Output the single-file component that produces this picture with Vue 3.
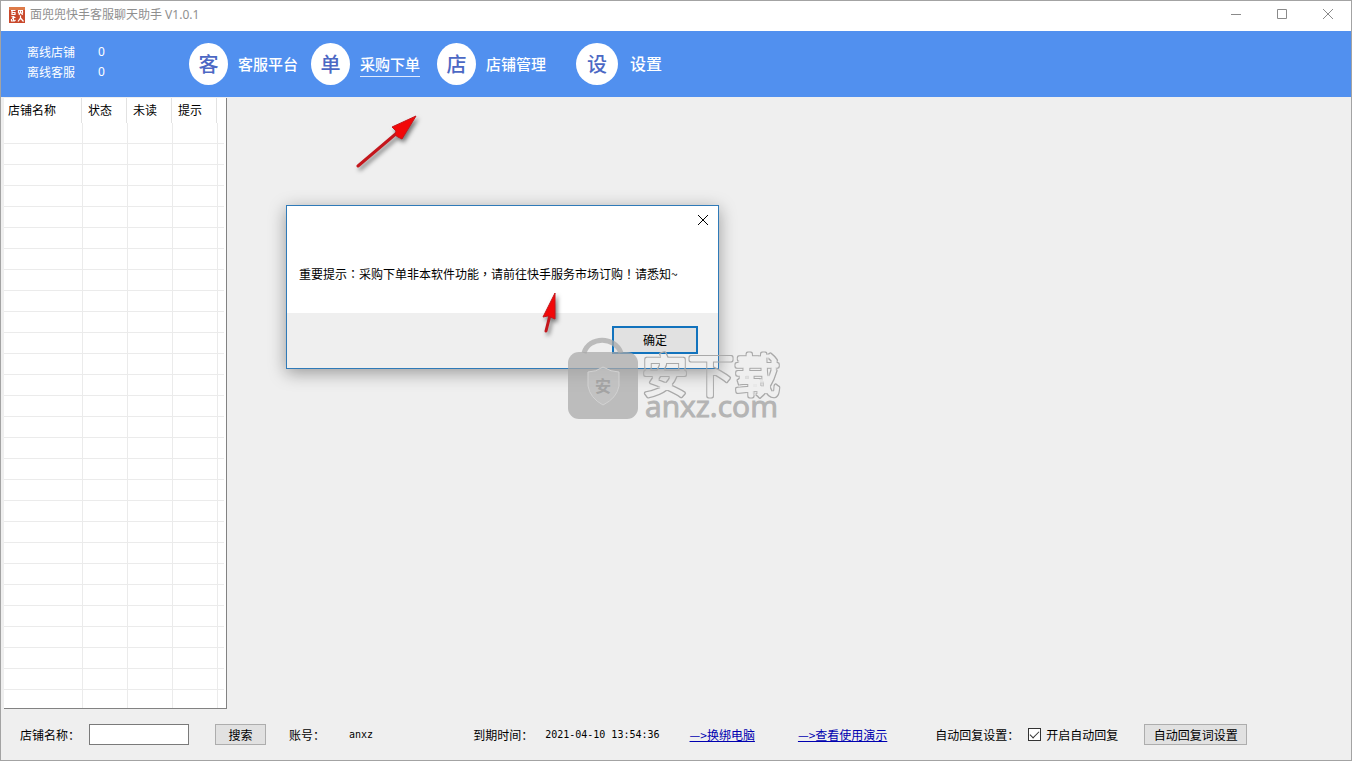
<script setup>
import { ref } from 'vue'

const navItems = [
  { mark: '客', label: '客服平台' },
  { mark: '单', label: '采购下单', active: true },
  { mark: '店', label: '店铺管理' },
  { mark: '设', label: '设置', wide: true },
]
const columns = ['店铺名称', '状态', '未读', '提示', '']
const rowCount = 28
const keyword = ref('')
const autoReply = ref(true)
</script>

<template>
  <div class="window">
    <header class="titlebar">
      <svg class="logo" viewBox="0 0 16 16" aria-hidden="true">
        <rect width="16" height="16" fill="#c9492c" />
        <path d="M0 0h16v3H0z" fill="#dd7a48" />
        <g fill="none" stroke="#fff" stroke-width="1.200">
          <path d="M2 3.500h4.500M3 4v3.500h3V5M3 5.500h3M9 3.500h5M9.500 3.500v2.500h4V3.500M11.500 3.500v2.500M10 8l1-2M13.500 8l-1-2" />
          <path d="M2.500 9.500l4 1M3 11.500l3-1.500M4.500 9v5M2.500 12v2h3l1-1M11.500 8.500v2.500L9 14.500M11.500 11L14.500 14.500" />
        </g>
      </svg>
      <h1>面兜兜快手客服聊天助手 V1.0.1</h1>
      <div class="controls">
        <button type="button" aria-label="最小化">
          <svg viewBox="0 0 12 12"><path d="M1 5.500h10" /></svg>
        </button>
        <button type="button" aria-label="最大化">
          <svg viewBox="0 0 12 12"><path d="M1.500 .5h9v9h-9z" /></svg>
        </button>
        <button type="button" aria-label="关闭">
          <svg viewBox="0 0 12 12"><path d="M1 0l10 10M11 0L1 10" /></svg>
        </button>
      </div>
    </header>

    <div class="banner">
      <dl class="status">
        <dt>离线店铺</dt><dd>0</dd>
        <dt>离线客服</dt><dd>0</dd>
      </dl>
      <nav class="nav">
        <button v-for="item in navItems" :key="item.label" type="button" :class="{ wide: item.wide }">
          <span class="mark">{{ item.mark }}</span>
          <span class="name" :class="{ active: item.active }">{{ item.label }}</span>
        </button>
      </nav>
    </div>

    <main class="main">
      <div class="list">
        <table>
          <colgroup>
            <col class="col-name" /><col class="col" /><col class="col" /><col class="col" /><col />
          </colgroup>
          <thead>
            <tr><th v-for="(c, i) in columns" :key="i" scope="col">{{ c }}</th></tr>
          </thead>
          <tbody>
            <tr v-for="r in rowCount" :key="r"><td v-for="(c, i) in columns" :key="i"></td></tr>
          </tbody>
        </table>
      </div>
    </main>

    <footer class="footer">
      <label for="shop">店铺名称：</label>
      <input id="shop" v-model="keyword" class="field" type="text" />
      <button type="button" class="btn search">搜索</button>
      <span class="account">账号：</span>
      <span class="mono user">anxz</span>
      <span class="expire">到期时间：</span>
      <span class="mono time">2021-04-10 13:54:36</span>
      <a class="rebind" href="#">—&gt;换绑电脑</a>
      <a class="demo" href="#">—&gt;查看使用演示</a>
      <span class="auto">自动回复设置：</span>
      <label class="check"><input v-model="autoReply" type="checkbox" />开启自动回复</label>
      <button type="button" class="btn words">自动回复词设置</button>
    </footer>

    <section class="dialog" role="dialog" aria-label="重要提示">
      <div class="dialog-body">
        <button type="button" class="close" aria-label="关闭">
          <svg viewBox="0 0 12 12"><path d="M1 1l10 10M11 1L1 11" /></svg>
        </button>
        <p>重要提示<span class="mid">：</span>采购下单非本软件功能<span class="mid">，</span>请前往快手服务市场订购<span class="mid">！</span>请悉知~</p>
      </div>
      <div class="dialog-foot">
        <button type="button" class="ok">确定</button>
      </div>
    </section>

    <svg class="arrow arrow-long" viewBox="0 0 80 70" aria-hidden="true">
      <path d="M8 56L48 22" stroke="#c4161c" stroke-width="3" stroke-linecap="round" />
      <path d="M66 6L42 17L46 21L45 25L48 27L52 29Z" fill="#f20808" stroke="#c4161c" stroke-width="1" />
    </svg>
    <svg class="arrow arrow-short" viewBox="0 0 30 55" aria-hidden="true">
      <path d="M11 44L15 28" stroke="#c4161c" stroke-width="3" stroke-linecap="round" />
      <path d="M20 6L8 30L13 29L20 32Z" fill="#f20808" stroke="#c4161c" stroke-width="1" />
    </svg>

    <svg class="watermark" viewBox="0 0 220 90" aria-hidden="true">
      <filter id="contour" x="-5%" y="-10%" width="110%" height="120%">
        <feMorphology in="SourceAlpha" operator="erode" radius="1" result="inner" />
        <feComposite in="SourceGraphic" in2="inner" operator="out" />
      </filter>
      <path d="M19 19C24 2 50 2 56 19" fill="none" stroke="#aaa" stroke-opacity=".75" stroke-width="5" />
      <rect x="3" y="18" width="70" height="67" rx="11" fill="#a8a8a8" fill-opacity=".72" />
      <path d="M38 33Q46 38 54 38V52Q52 64 38 71Q25 64 23 52V38Q31 38 38 33Z" fill="#c6c6c6" fill-opacity=".6" stroke="#d2d2d2" />
      <text class="wm-seal" x="30" y="58">安</text>
      <text class="wm-name" x="77" y="58">安下载</text>
      <text class="wm-site" x="80" y="83">anxz.com</text>
    </svg>
  </div>
</template>

<style>
body {
  margin: 0;
}
</style>

<style scoped>
.window {
  position: relative;
  display: flex;
  flex-direction: column;
  box-sizing: border-box;
  height: 100vh;
  border: 1px solid #a3a3a3;
  background: #efefef;
  color: #000;
  font-family: "Noto Sans CJK SC", sans-serif;
  font-size: 12px;
  line-height: 20px;
  overflow: hidden;
}
button {
  margin: 0;
  padding: 0;
  border: 0;
  background: none;
  color: inherit;
  font: inherit;
}
.titlebar {
  display: flex;
  align-items: center;
  flex: none;
  box-sizing: border-box;
  height: 30px;
  padding: 0 0 2px 8px;
  background: #fff;
}
.logo {
  width: 16px;
  height: 16px;
}
h1 {
  margin: 0 auto 0 5px;
  color: #8f8f8f;
  font-family: "Noto Sans", "Noto Sans CJK SC", sans-serif;
  font-size: 12px;
  font-weight: 400;
}
.controls {
  display: flex;
}
.controls button {
  display: flex;
  align-items: center;
  justify-content: center;
  width: 46px;
  height: 28px;
}
.controls svg,
.close svg {
  width: 12px;
  height: 12px;
  fill: none;
  stroke: #8a8a8a;
  overflow: visible;
}
.banner {
  display: flex;
  align-items: center;
  flex: none;
  height: 66px;
  background: #5190ef;
  color: #fff;
}
.status {
  display: grid;
  grid-template-columns: 71px 91px;
  margin: 0 0 0 26px;
  padding-bottom: 5px;
}
.status dd {
  margin: 0;
  font-family: "Noto Sans", sans-serif;
}
.nav {
  display: grid;
  grid-template-columns: 122px 126px 139px auto;
}
.nav button {
  display: flex;
  align-items: center;
  gap: 10px;
}
.nav .wide {
  gap: 12px;
}
.mark {
  display: flex;
  align-items: center;
  justify-content: center;
  width: 39px;
  height: 42px;
  border-radius: 50%;
  background: #fff;
  color: #4c68c4;
  font-size: 20px;
  font-weight: 500;
}
.wide .mark {
  width: 42px;
}
.name {
  padding-bottom: 1px;
  border-bottom: 1px solid transparent;
  font-size: 15px;
  font-weight: 500;
  line-height: 23px;
}
.wide .name {
  font-size: 16px;
}
.name.active {
  border-bottom-color: #dfeaff;
}
.main {
  display: flex;
  flex: 1;
  min-height: 0;
  padding: 1px 0 0 3px;
}
.list {
  box-sizing: border-box;
  width: 223px;
  padding-right: 2px;
  border-right: 1px solid #828282;
  border-bottom: 1px solid #828282;
  background: #fff;
  overflow: hidden;
}
table {
  width: 100%;
  table-layout: fixed;
  border-collapse: separate;
  border-spacing: 0;
}
.col-name {
  width: 78px;
}
.col {
  width: 45px;
}
th {
  box-sizing: border-box;
  height: 25px;
  padding: 0 0 1px 6px;
  border-right: 1px solid #e2e2e2;
  font-weight: 400;
  text-align: left;
  white-space: nowrap;
}
th:first-child {
  padding-left: 4px;
}
th:last-child {
  border-right: 0;
}
td {
  box-sizing: border-box;
  height: 21px;
  padding: 0;
  border-bottom: 1px solid #ebebeb;
  border-left: 1px solid #ebebeb;
}
td:first-child {
  border-left: 0;
}
.footer {
  display: flex;
  align-items: center;
  flex: none;
  height: 51px;
  padding-left: 19px;
  white-space: nowrap;
}
.field {
  box-sizing: border-box;
  width: 100px;
  height: 21px;
  margin-left: 9px;
  padding: 0 4px;
  border: 1px solid #7a7a7a;
  background: #fff;
  font: inherit;
}
.btn {
  box-sizing: border-box;
  height: 21px;
  border: 1px solid #adadad;
  background: #e1e1e1;
  line-height: 19px;
}
.search {
  width: 51px;
  margin-left: 26px;
}
.account {
  margin-left: 23px;
}
.mono {
  font-family: "DejaVu Sans Mono", monospace;
  font-size: 10px;
}
.user {
  margin-left: 24px;
}
.expire {
  margin-left: 100px;
}
.time {
  margin-left: 12px;
}
.footer a {
  color: #0000b0;
  text-decoration: underline;
}
.rebind {
  margin-left: 30px;
}
.demo {
  margin-left: 43px;
}
.auto {
  margin-left: 48px;
}
.check {
  display: flex;
  align-items: center;
  gap: 5px;
  margin-left: 9px;
}
.check input {
  appearance: none;
  box-sizing: border-box;
  width: 13px;
  height: 13px;
  margin: 0;
  border: 1px solid #333;
  background: #fff;
}
.check input:checked::before {
  content: "";
  display: block;
  box-sizing: border-box;
  width: 9px;
  height: 5px;
  margin: 2px 0 0 1px;
  border: solid #333;
  border-width: 0 0 1px 1px;
  transform: rotate(-45deg);
}
.words {
  width: 103px;
  margin-left: 26px;
}
.dialog {
  position: absolute;
  top: 204px;
  left: 285px;
  box-sizing: border-box;
  width: 433px;
  border: 1px solid #2f7ab8;
  background: #fff;
  box-shadow: 0 4px 16px rgba(0, 0, 0, 0.36);
}
.dialog-body {
  display: flex;
  flex-direction: column;
  height: 107px;
}
.close {
  display: flex;
  align-self: flex-end;
  margin: 8px 9px 0 0;
}
.close svg {
  stroke: #000;
}
.dialog-body p {
  margin: 38px 12px 0;
  white-space: nowrap;
}
.mid {
  font-family: "Noto Sans CJK TC", sans-serif;
}
.dialog-foot {
  display: flex;
  justify-content: flex-end;
  box-sizing: border-box;
  height: 55px;
  padding: 13px 20px 0;
  background: #efefef;
}
.ok {
  box-sizing: border-box;
  width: 86px;
  height: 28px;
  border: 2px solid #1273bd;
  background: #e1e1e1;
}
.arrow {
  position: absolute;
  fill: none;
  filter: drop-shadow(2px 3px 2px rgba(0, 0, 0, 0.5));
}
.arrow-long {
  top: 109px;
  left: 349px;
  width: 80px;
  height: 70px;
}
.arrow-short {
  top: 286px;
  left: 534px;
  width: 30px;
  height: 55px;
}
.watermark {
  position: absolute;
  top: 333px;
  left: 564px;
  width: 220px;
  height: 90px;
}
.wm-seal {
  fill: #a3a3a3;
  font-size: 16px;
  font-weight: 700;
}
.wm-name {
  fill: #a9a9a9;
  stroke: #a9a9a9;
  stroke-width: 4px;
  stroke-linejoin: round;
  font-size: 46px;
  font-weight: 400;
  filter: url(#contour);
}
.wm-site {
  fill: #b4b4b4;
  stroke: #b4b4b4;
  stroke-width: 1px;
  font-family: "Open Sans", sans-serif;
  font-size: 30px;
}
</style>
